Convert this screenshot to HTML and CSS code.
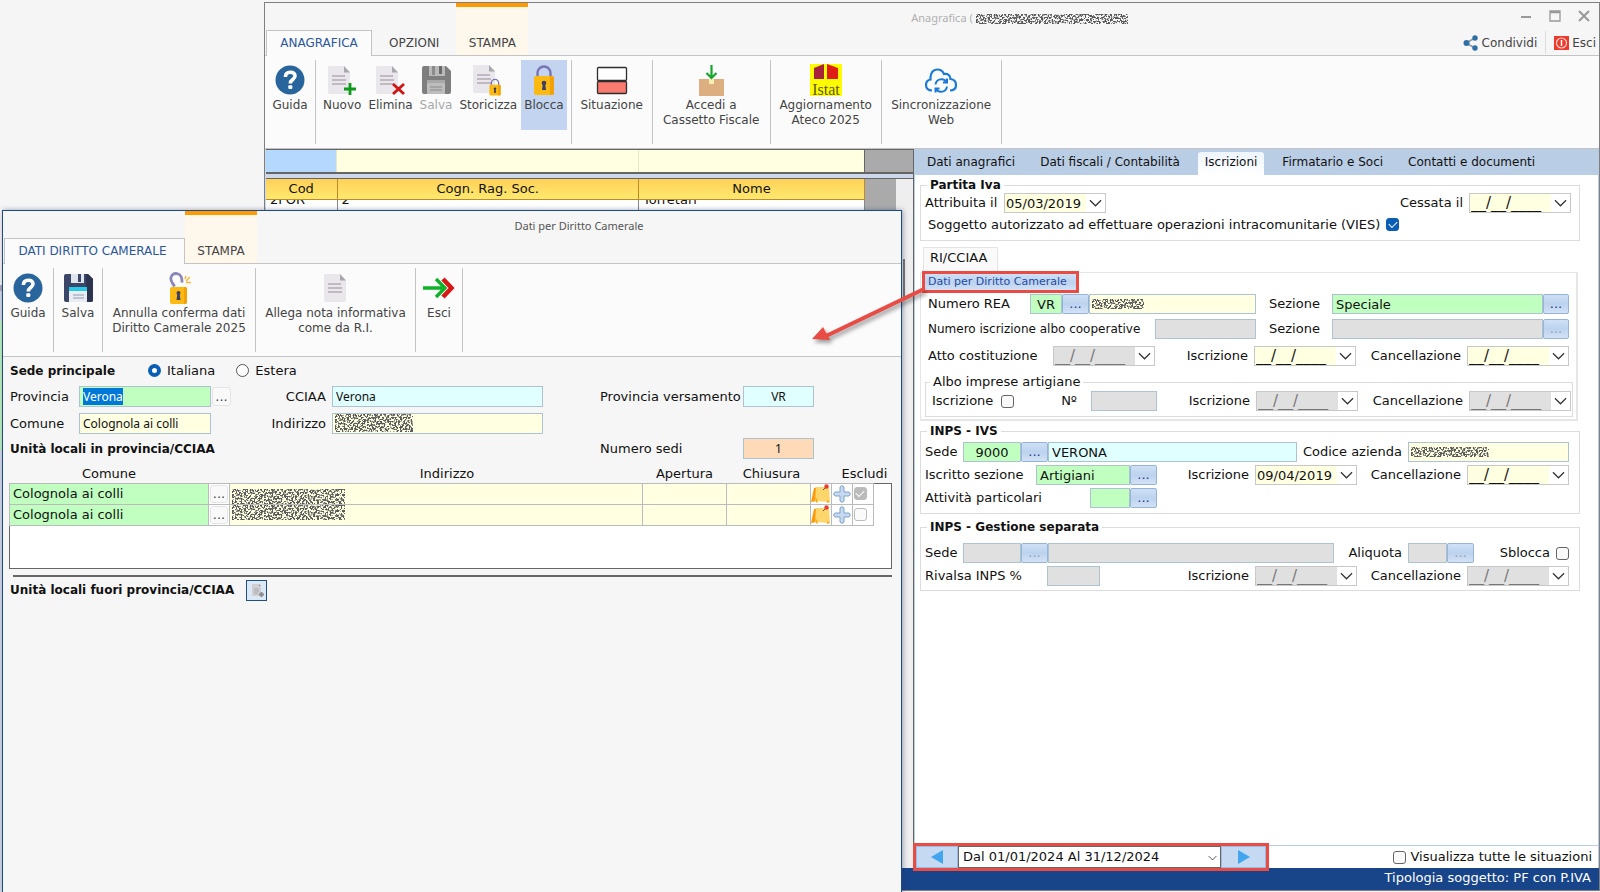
FILE: index.html
```html
<!DOCTYPE html>
<html lang="it">
<head>
<meta charset="utf-8">
<title>Anagrafica</title>
<link rel="stylesheet" href="styles.css">
</head>
<body>
<svg class="defs" width="0" height="0" aria-hidden="true">
  <defs>
    <filter id="noise" x="0" y="0" width="100%" height="100%">
      <feTurbulence type="fractalNoise" baseFrequency="0.55" numOctaves="2" seed="7"/>
      <feColorMatrix values="0 0 0 0 0.1  0 0 0 0 0.1  0 0 0 0 0.1  9 0 0 0 -4.1"/>
    </filter>
    <symbol id="i-help" viewBox="0 0 32 32">
      <circle cx="16" cy="16" r="14.5" fill="#28659d"/>
      <path d="M11.400 13c0-3.200 2-4.800 4.800-4.800 2.900 0 4.800 1.500 4.800 3.900 0 3.500-4.700 3.400-4.700 7.400" fill="none" stroke="#fff" stroke-width="3.600"/>
      <rect x="14.300" y="21.300" width="4" height="3.800" rx="1" fill="#fff"/>
    </symbol>
    <symbol id="i-doc" viewBox="0 0 32 32">
      <path d="M6 2h15l6 6v20a2 2 0 0 1-2 2H7a2 2 0 0 1-2-2V3z" fill="#e9e7ec"/>
      <path d="M21 2l6 6.500h-6z" fill="#aaa8ae"/>
      <path d="M9 12h13M9 16h14M9 20h14" stroke="#b5a9b3" stroke-width="1.300"/>
    </symbol>
    <symbol id="i-new" viewBox="0 0 32 32">
      <use href="#i-doc" x="-3" width="32" height="32"/>
      <path d="M24 19v12M18 25h12" stroke="#0f9a1c" stroke-width="2.800"/>
    </symbol>
    <symbol id="i-del" viewBox="0 0 32 32">
      <use href="#i-doc" x="-3" width="32" height="32"/>
      <path d="M19 20l11 10M30 20l-11 10" stroke="#d01414" stroke-width="2.800"/>
    </symbol>
    <symbol id="i-lock" viewBox="0 0 32 32">
      <path d="M9.500 14V9a6.500 6.500 0 0 1 13 0v5" fill="none" stroke="#7a74b4" stroke-width="2.400"/>
      <rect x="6" y="12" width="20" height="19" rx="2" fill="#fdb913"/>
      <path d="M22 12h2a2 2 0 0 1 2 2v15a2 2 0 0 1-2 2h-2z" fill="#f2a206"/>
      <circle cx="16" cy="19" r="2.300" fill="#3a3f63"/>
      <path d="M15 19h2l1 7h-4z" fill="#3a3f63"/>
    </symbol>
    <symbol id="i-store" viewBox="0 0 32 32">
      <use href="#i-doc" x="-4" y="-1" width="32" height="32"/>
      <use href="#i-lock" x="14" y="14" width="18" height="18"/>
    </symbol>
    <symbol id="i-save-off" viewBox="0 0 32 32">
      <path d="M2 4a2 2 0 0 1 2-2h22l5 5v21a2 2 0 0 1-2 2H4a2 2 0 0 1-2-2z" fill="#7e7e7e"/>
      <path d="M9 2h16v10H9z" fill="#b9b9b9"/><path d="M19 2h3v8h-3z" fill="#6a6a6a"/><path d="M12 2h3v9h-3z" fill="#8b8b8b"/>
      <path d="M7 17h18v13H7z" fill="#bdbdbd"/><path d="M7 16h18v3H7z" fill="#a8a8a8"/>
      <path d="M10 23h12M10 26h12" stroke="#8a8a8a"/>
    </symbol>
    <symbol id="i-save" viewBox="0 0 32 32">
      <path d="M2 4a2 2 0 0 1 2-2h22l5 5v21a2 2 0 0 1-2 2H4a2 2 0 0 1-2-2z" fill="#3c4668"/>
      <path d="M24 2h2l5 5v21a2 2 0 0 1-2 2h-5z" fill="#2c3450"/>
      <path d="M9 2h13v9H9z" fill="#dfe5ec"/><path d="M16 2h3v8h-3z" fill="#3c4668"/>
      <path d="M7 16h18v14H7z" fill="#e8edf3"/><path d="M7 15h18v4H7z" fill="#27c9e6"/>
      <path d="M11 23h11M11 26h11" stroke="#8f9aab"/>
    </symbol>
    <symbol id="i-unlock" viewBox="0 0 32 32">
      <path d="M11.500 14.500C10 11.500 7.500 9.500 7.800 6.200 8.200 2.800 11 1 14 1.600c3.500.7 5.500 4.400 4.800 8.900" fill="none" stroke="#8a86b8" stroke-width="2.800"/>
      <rect x="7" y="15" width="17" height="17" rx="2" fill="#fdb913"/>
      <path d="M21 15h1a2 2 0 0 1 2 2v13a2 2 0 0 1-2 2h-1z" fill="#f2a206"/>
      <circle cx="15.500" cy="21" r="2" fill="#3a3f63"/><path d="M14.500 21h2l1 7h-4z" fill="#3a3f63"/>
      <path d="M22 7l1-3M23 9l4-4M23 10.500h5" stroke="#f6b930" stroke-width="1.500"/>
    </symbol>
    <symbol id="i-situ" viewBox="0 0 32 32">
      <rect x="1.500" y="3.500" width="29" height="13" rx="1" fill="#fff" stroke="#2e2e2e" stroke-width="1.300"/>
      <rect x="1.500" y="17.500" width="29" height="12" rx="1" fill="#f97a6f" stroke="#2e2e2e" stroke-width="1.300"/>
    </symbol>
    <symbol id="i-box" viewBox="0 0 32 32">
      <path d="M4 15h25v17H4z" fill="#dcae80"/><path d="M14 15h5v5h-5z" fill="#fbeeb0"/>
      <path d="M16.500 1v12M11.500 9l5 5 5-5" fill="none" stroke="#17a62d" stroke-width="2.200"/>
    </symbol>
    <symbol id="i-istat" viewBox="0 0 32 32">
      <path d="M0 0h32v32H0z" fill="#fffb00"/>
      <path d="M4 4l10-4v15H4z" fill="#a8223c"/><path d="M17 0l11 4v11H17z" fill="#df1d14"/>
      <text x="16" y="30.500" text-anchor="middle" font-family="Liberation Serif, serif" font-size="16" fill="#5d5a2c">Istat</text>
    </symbol>
    <symbol id="i-cloud" viewBox="0 0 32 32">
      <path d="M7 26.500C3 26.500 1 24 1 21c0-3 2-5 4.500-5.500C5 9 8 5.500 12.500 5.500c3.500 0 5.500 2 6.500 4.500 4-1 6.500 2 6.500 5 3.500.5 5.500 3 5.500 6 0 3.500-2.500 5.500-6 5.500" fill="none" stroke="#1a7ad8" stroke-width="2.200"/>
      <path d="M10.500 20.500a6 6 0 0 1 11-2.500M22 22.500a6 6 0 0 1-11 2.500M22 14.500v4h-4M10.500 28.500v-4h4" fill="none" stroke="#1a7ad8" stroke-width="2"/>
    </symbol>
    <symbol id="i-exit" viewBox="0 0 32 32">
      <path d="M20 7l8.500 9-8.500 9" fill="none" stroke="#d81717" stroke-width="4.500"/>
      <path d="M0 16h22M13 7l9 9-9 9" fill="none" stroke="#0fb32a" stroke-width="3.400"/>
    </symbol>
    <symbol id="i-share" viewBox="0 0 16 16">
      <path d="M3 8l9-5M3 8l9 5" stroke="#8a9aa8" stroke-width="1.500"/>
      <circle cx="3.500" cy="8" r="3" fill="#2f6fa8"/><circle cx="12" cy="3" r="2.700" fill="#2f6fa8"/><circle cx="12" cy="13" r="2.700" fill="#2f6fa8"/>
    </symbol>
    <symbol id="i-power" viewBox="0 0 16 16">
      <path d="M1 1h15v14H1z" fill="#ee3a2c"/><circle cx="8.500" cy="8" r="5" fill="none" stroke="#ffd6d0" stroke-width="1.200"/><path d="M8.500 5v6" stroke="#fff" stroke-width="1.500"/>
    </symbol>
    <symbol id="i-chev" viewBox="0 0 14 8"><path d="M1 1l6 6 6-6" fill="none" stroke="#333" stroke-width="1.300"/></symbol>
    <symbol id="i-note" viewBox="0 0 20 20">
      <path d="M3 4l4-1-1 14-6 1z" fill="#fb9a0b"/><path d="M5 3h13l1 15-15-1z" fill="#fdd66b"/><path d="M4 13l1 5 2 1-1-4zM16 16l3 2-3 1z" fill="#f5a91c"/>
      <path d="M12 6l3-3" stroke="#555"/><circle cx="15.500" cy="2.500" r="2.200" fill="#ec3b31"/>
    </symbol>
    <symbol id="i-plus" viewBox="0 0 20 20">
      <path d="M8 3l2-1.500L12 3v5h5l1.500 2L17 12h-5v5l-2 1.500L8 17v-5H3l-1.500-2L3 8h5z" fill="#c7d9ee" stroke="#7ea3cc"/>
    </symbol>
  </defs>
</svg>

<div class="desktop">
  <section class="window main" aria-label="Anagrafica">
    <header class="caption">
      <nav class="rtabs">
        <button class="rtab on">ANAGRAFICA</button>
        <button class="rtab">OPZIONI</button>
        <button class="rtab print">STAMPA</button>
      </nav>
      <div class="title faded">Anagrafica (<svg class="scr" width="152" height="10"><rect width="152" height="10" filter="url(#noise)"/></svg></div>
      <div class="corner">
        <div class="winbtns">
          <button aria-label="Riduci"><svg width="12" height="12"><path d="M1 7h10" stroke="#999" stroke-width="2"/></svg></button>
          <button aria-label="Ingrandisci"><svg width="12" height="12"><path d="M1 1h10v10H1zM1 2.500h10" fill="none" stroke="#999" stroke-width="1.300"/></svg></button>
          <button aria-label="Chiudi"><svg width="12" height="12"><path d="M1 1l10 10M11 1L1 11" stroke="#999" stroke-width="2"/></svg></button>
        </div>
        <div class="quick">
          <button><svg width="16" height="16"><use href="#i-share"/></svg>Condividi</button>
          <button class="sep"><svg width="16" height="16"><use href="#i-power"/></svg>Esci</button>
        </div>
      </div>
    </header>

    <div class="ribbon">
      <div class="group"><button class="rb"><svg><use href="#i-help"/></svg>Guida</button></div>
      <div class="group spread">
        <button class="rb"><svg><use href="#i-new"/></svg>Nuovo</button>
        <button class="rb"><svg><use href="#i-del"/></svg>Elimina</button>
        <button class="rb off" disabled><svg><use href="#i-save-off"/></svg>Salva</button>
        <button class="rb"><svg><use href="#i-store"/></svg>Storicizza</button>
        <button class="rb lit"><svg><use href="#i-lock"/></svg>Blocca</button>
      </div>
      <div class="group g80"><button class="rb"><svg><use href="#i-situ"/></svg>Situazione</button></div>
      <div class="group g118"><button class="rb"><svg><use href="#i-box"/></svg><span>Accedi a<br>Cassetto Fiscale</span></button></div>
      <div class="group g111"><button class="rb"><svg><use href="#i-istat"/></svg><span>Aggiornamento<br>Ateco 2025</span></button></div>
      <div class="group g120"><button class="rb"><svg><use href="#i-cloud"/></svg><span>Sincronizzazione<br>Web</span></button></div>
    </div>

    <div class="split">
      <div class="list">
        <div class="filter">
          <input class="f-cod" aria-label="Filtro Cod"><input class="f-soc" aria-label="Filtro Cogn. Rag. Soc."><input class="f-nome" aria-label="Filtro Nome"><span></span>
        </div>
        <div class="listbody">
          <table class="people">
            <colgroup><col class="c-cod"><col><col class="c-nome"></colgroup>
            <thead><tr><th>Cod</th><th>Cogn. Rag. Soc.</th><th>Nome</th></tr></thead>
            <tbody><tr><td><div>2FOR</div></td><td><div>2</div></td><td><div>Torretari</div></td></tr></tbody>
          </table>
          <div class="dead"></div>
          <div class="track"></div>
        </div>
      </div>

      <div class="detail">
        <nav class="tabs">
          <button>Dati anagrafici</button><button>Dati fiscali / Contabilità</button><button class="on">Iscrizioni</button><button>Firmatario e Soci</button><button>Contatti e documenti</button>
        </nav>
        <div class="body">
          <fieldset class="box iva">
            <legend>Partita Iva</legend>
            <div class="row r-iva">
              <label for="attr">Attribuita il</label>
              <span class="date"><input id="attr" value="05/03/2019"><button aria-label="Calendario"><svg><use href="#i-chev"/></svg></button></span>
              <label class="lr" for="cess">Cessata il</label>
              <span class="date void"><input id="cess" value="__/__/____"><button aria-label="Calendario"><svg><use href="#i-chev"/></svg></button></span>
            </div>
            <div class="vies"><label for="vies">Soggetto autorizzato ad effettuare operazioni intracomunitarie (VIES)</label><input type="checkbox" id="vies" checked></div>
          </fieldset>

          <button class="subtab">RI/CCIAA</button>
          <div class="ri">
            <button class="dirlink">Dati per Diritto Camerale</button>
            <div class="row r-rea">
              <label class="in" for="rea">Numero REA</label>
              <input class="g mid" value="VR" aria-label="Provincia REA"><button class="dots">...</button>
              <span class="cover y"><input class="y" id="rea"><svg class="scr" width="52" height="10"><rect width="52" height="10" filter="url(#noise)"/></svg></span>
              <label class="ls" for="sez1">Sezione</label><input class="g" id="sez1" value="Speciale"><button class="dots">...</button>
            </div>
            <div class="row r-coop">
              <label class="in tight" for="coop">Numero iscrizione albo cooperative</label><input id="coop" disabled>
              <label class="ls" for="sez2">Sezione</label><input id="sez2" disabled><button class="dots" disabled>...</button>
            </div>
            <div class="row r-atto">
              <label class="in" for="atto">Atto costituzione</label>
              <span class="date void off"><input id="atto" value="__/__/____" disabled><button aria-label="Calendario"><svg><use href="#i-chev"/></svg></button></span>
              <label class="lr" for="isc1">Iscrizione</label>
              <span class="date void"><input id="isc1" value="__/__/____"><button aria-label="Calendario"><svg><use href="#i-chev"/></svg></button></span>
              <label class="lr" for="can1">Cancellazione</label>
              <span class="date void"><input id="can1" value="__/__/____"><button aria-label="Calendario"><svg><use href="#i-chev"/></svg></button></span>
            </div>
            <fieldset class="box albo">
              <legend>Albo imprese artigiane</legend>
              <div class="row r-albo">
                <label class="in" for="alb">Iscrizione</label><input type="checkbox" id="alb">
                <label class="lr no" for="num">Nº</label><input id="num" disabled>
                <label class="lr" for="isc2">Iscrizione</label>
                <span class="date void off"><input id="isc2" value="__/__/____" disabled><button aria-label="Calendario"><svg><use href="#i-chev"/></svg></button></span>
                <label class="lr" for="can2">Cancellazione</label>
                <span class="date void off"><input id="can2" value="__/__/____" disabled><button aria-label="Calendario"><svg><use href="#i-chev"/></svg></button></span>
              </div>
            </fieldset>
          </div>

          <fieldset class="box ivs">
            <legend>INPS - IVS</legend>
            <div class="row r-sede">
              <label for="sede">Sede</label><input class="g mid" id="sede" value="9000"><button class="dots">...</button><input class="c" value="VERONA" aria-label="Nome sede">
              <label class="lr" for="caz">Codice azienda</label>
              <span class="cover y"><input class="y" id="caz"><svg class="scr" width="78" height="10"><rect width="78" height="10" filter="url(#noise)"/></svg></span>
            </div>
            <div class="row r-sez">
              <label for="isez">Iscritto sezione</label><input class="g" id="isez" value="Artigiani"><button class="dots">...</button>
              <label class="lr" for="isc3">Iscrizione</label>
              <span class="date"><input id="isc3" value="09/04/2019"><button aria-label="Calendario"><svg><use href="#i-chev"/></svg></button></span>
              <label class="lr" for="can3">Cancellazione</label>
              <span class="date void"><input id="can3" value="__/__/____"><button aria-label="Calendario"><svg><use href="#i-chev"/></svg></button></span>
            </div>
            <div class="row r-att"><label for="att">Attività particolari</label><input class="g" id="att"><button class="dots">...</button></div>
          </fieldset>

          <fieldset class="box gs">
            <legend>INPS - Gestione separata</legend>
            <div class="row r-gs">
              <label for="gsede">Sede</label><input id="gsede" disabled><button class="dots" disabled>...</button><input aria-label="Nome sede" disabled>
              <label class="lr" for="ali">Aliquota</label><input id="ali" disabled><button class="dots" disabled>...</button>
              <label class="lr" for="sbl">Sblocca</label><input type="checkbox" id="sbl">
            </div>
            <div class="row r-riv">
              <label for="riv">Rivalsa INPS %</label><input id="riv" disabled>
              <label class="lr" for="isc4">Iscrizione</label>
              <span class="date void off"><input id="isc4" value="__/__/____" disabled><button aria-label="Calendario"><svg><use href="#i-chev"/></svg></button></span>
              <label class="lr" for="can4">Cancellazione</label>
              <span class="date void off"><input id="can4" value="__/__/____" disabled><button aria-label="Calendario"><svg><use href="#i-chev"/></svg></button></span>
            </div>
          </fieldset>
        </div>
        <footer class="pager">
          <div class="period">
            <button aria-label="Precedente"><svg width="12" height="14"><path d="M12 0v14L0 7z" fill="#42a5ee"/></svg></button>
            <span class="pick">
              <select aria-label="Periodo"><option>Dal 01/01/2024 Al 31/12/2024</option></select>
              <svg width="9" height="6"><use href="#i-chev"/></svg>
            </span>
            <button class="next" aria-label="Successivo"><svg width="12" height="14"><path d="M0 0v14l12-7z" fill="#42a5ee"/></svg></button>
          </div>
          <label class="all"><input type="checkbox">Visualizza tutte le situazioni</label>
        </footer>
      </div>
    </div>
    <div class="status">Tipologia soggetto: PF con P.IVA</div>
  </section>

  <section class="window dialog" aria-label="Dati per Diritto Camerale">
    <header class="caption">
      <nav class="rtabs">
        <button class="rtab on">DATI DIRITTO CAMERALE</button>
        <button class="rtab print">STAMPA</button>
      </nav>
      <div class="title">Dati per Diritto Camerale</div>
    </header>
    <div class="ribbon">
      <div class="group"><button class="rb"><svg><use href="#i-help"/></svg>Guida</button></div>
      <div class="group g49"><button class="rb"><svg><use href="#i-save"/></svg>Salva</button></div>
      <div class="group g153"><button class="rb"><svg><use href="#i-unlock"/></svg><span>Annulla conferma dati<br>Diritto Camerale 2025</span></button></div>
      <div class="group g160"><button class="rb"><svg><use href="#i-doc"/></svg><span>Allega nota informativa<br>come da R.I.</span></button></div>
      <div class="group g47"><button class="rb"><svg><use href="#i-exit"/></svg>Esci</button></div>
    </div>
    <div class="dbody">
      <div class="kind">
        <strong>Sede principale</strong>
        <label><input type="radio" name="kind" checked>Italiana</label>
        <label><input type="radio" name="kind">Estera</label>
      </div>
      <div class="seat">
        <label for="prov">Provincia</label><span class="cover g"><mark>Verona</mark><input class="g" id="prov"></span><button class="plain">...</button>
        <label class="lr" for="cciaa">CCIAA</label><input class="c" id="cciaa" value="Verona">
        <label class="far" for="pv">Provincia versamento</label><input class="c mid" id="pv" value="VR">
        <label for="com">Comune</label><input class="y" id="com" value="Colognola ai colli"><span></span>
        <label class="lr" for="ind">Indirizzo</label><span class="cover y"><input class="y" id="ind"><svg class="scr" width="78" height="18"><rect width="78" height="18" filter="url(#noise)"/></svg></span>
      </div>
      <div class="units"><h2>Unità locali in provincia/CCIAA</h2><label class="far" for="ns">Numero sedi</label><input class="o mid" id="ns" value="1"></div>
      <table class="grid">
        <colgroup><col class="k-com"><col class="k-i"><col><col class="k-d"><col class="k-d"><col class="k-i"><col class="k-i"><col class="k-i"><col class="k-e"></colgroup>
        <thead><tr><th>Comune</th><th></th><th class="h-ind">Indirizzo</th><th>Apertura</th><th class="h-chi">Chiusura</th><th></th><th class="h-chi" colspan="3">Escludi</th></tr></thead>
        <tbody>
          <tr><td class="g">Colognola ai colli</td><td><button class="plain">...</button></td><td class="y"><svg class="scr up" width="113" height="15"><rect width="113" height="15" filter="url(#noise)"/></svg></td><td class="y"></td><td class="y"></td><td><svg class="ic"><use href="#i-note"/></svg></td><td><svg class="ic"><use href="#i-plus"/></svg></td><td><input type="checkbox" aria-label="Escludi" checked disabled></td><td class="end"></td></tr>
          <tr><td class="g">Colognola ai colli</td><td><button class="plain">...</button></td><td class="y"><svg class="scr down" width="113" height="15"><rect width="113" height="15" filter="url(#noise)"/></svg></td><td class="y"></td><td class="y"></td><td><svg class="ic"><use href="#i-note"/></svg></td><td><svg class="ic"><use href="#i-plus"/></svg></td><td><input type="checkbox" aria-label="Escludi" disabled></td><td class="end"></td></tr>
          <tr class="fill"><td colspan="9"></td></tr>
        </tbody>
      </table>
      <hr>
      <div class="outside"><h2>Unità locali fuori provincia/CCIAA</h2><button aria-label="Aggiungi unità"><svg width="18" height="18" viewBox="0 0 18 18"><path d="M4 3h7l2 2v10H4z" fill="#cfcfd3"/><path d="M11 3l2 2h-2z" fill="#999"/><path d="M6 8h5M6 10h5M6 12h4" stroke="#aaa"/><path d="M13.500 11v5M11 13.500h5" stroke="#8a8a8a" stroke-width="2"/></svg></button></div>
    </div>
  </section>

  <svg class="arrow" width="124" height="70" viewBox="0 0 124 70">
    <path d="M118 8L20 55" stroke="#e84c44" stroke-width="4"/>
    <path d="M6 58l11-12 7 13z" fill="#e84c44"/>
  </svg>
</div>
</body>
</html>
```
FILE: styles.css
```css
* { box-sizing: border-box; }
body { margin: 0; font: 13px/16px "DejaVu Sans", sans-serif; color: #111; }
button, input, select { font: inherit; color: inherit; margin: 0; padding: 0; border: 0; background: none; border-radius: 0; }
h2 { margin: 0; font-size: 12px; font-weight: bold; }
.defs { position: absolute; }

.desktop {
  position: relative; height: 100vh; overflow: hidden;
  background: linear-gradient(#a9a9c0 0 6px, #d3dbe8 6px 36px, #bdf3bd 36px 100%) 0 285px / 2px 165px no-repeat,
    linear-gradient(#d3dbe8, #d3dbe8) 0 450px / 2px 100% no-repeat, #f5f5f5;
}
.window { position: absolute; display: flex; flex-direction: column; background: #f6f6f6; }
.main { left: 264px; right: 0; top: 2px; bottom: 1px; border: 1px solid #7f7f7f; }
.dialog { left: 2px; right: 698px; top: 210px; bottom: 0; border: 1px solid #1e4a8c; border-bottom: 0; box-shadow: 1px 0 5px rgba(40, 60, 100, .45); }

/* caption and ribbon */
.caption { display: flex; height: 53px; border-bottom: 1px solid #c4c4c4; flex: none; }
.rtabs { display: flex; align-items: flex-end; padding-left: 1px; }
.rtab { height: 25px; padding: 2px 17px 0; font: 12px/23px "DejaVu Sans", sans-serif; color: #444; }
.rtab.on { color: #2b579a; background: #fbfbfb; border: 1px solid #c4c4c4; border-bottom: 0; height: 26px; margin-bottom: -1px; padding: 0 13px; line-height: 25px; min-width: 106px; }
.rtab.print { height: 52px; width: 72px; padding: 25px 0 0; background: #fef7ec; border-top: 4px solid #ff9a00; }
.title { flex: 1; padding-top: 6px; text-align: center; font: 11px/18px "Noto Sans", sans-serif; color: #555; }
.title.faded { padding-left: 48px; color: #b0b0b0; }
.title .scr { margin-left: 3px; }
.scr { vertical-align: middle; flex: none; }
.corner { display: flex; flex-direction: column; align-items: flex-end; }
.winbtns { display: flex; gap: 17px; padding: 7px 9px 0 0; height: 28px; }
.winbtns button { width: 12px; height: 12px; }
.winbtns svg { display: block; }
.quick { display: flex; align-items: center; font-size: 12px; color: #444; }
.quick button { display: flex; align-items: center; gap: 3px; height: 23px; padding-right: 8px; }
.quick .sep { border-left: 1px solid #ddd; padding: 0 3px 0 7px; }
.ribbon { display: flex; flex: none; height: 93px; padding: 4px 0; background: #fbfbfb; border-bottom: 1px solid #c4c4c4; color: #444; }
.group { display: flex; justify-content: center; align-items: flex-start; border-right: 1px solid #c4c4c4; width: 51px; }
.group.spread { width: auto; padding: 0 4px; gap: 1px; }
.group.spread .rb { padding: 4px 3px 0; }
.g80 { width: 81px; } .g118 { width: 118px; } .g111 { width: 111px; } .g120 { width: 120px; }
.g49 { width: 49px; } .g153 { width: 153px; } .g160 { width: 160px; } .g47 { width: 47px; }
.rb { display: flex; flex-direction: column; gap: 2px; align-items: center; justify-content: flex-start; height: 70px; padding-top: 4px; font-size: 12px; line-height: 15px; text-align: center; white-space: nowrap; }
.rb svg { display: block; width: 32px; height: 32px; flex: none; }
.rb.off { color: #a8a8a8; }
.rb.lit { background: #c3d4f0; }

/* left list */
.split { display: flex; flex: 1; min-height: 0; }
.list { flex: 0 0 649px; min-width: 0; display: flex; flex-direction: column; padding-left: 1px; background: #cdd8ec; border-right: 1px solid #666; }
.filter { display: flex; height: 25px; border: 1px solid #666; border-width: 1px 0 2px; background: #aaa; flex: none; }
.filter input { height: 22px; min-width: 0; border-right: 1px solid #e6e6c8; background: #ffffe1; }
.filter .f-cod { width: 71px; background: #b5d8ff; }
.filter .f-soc { flex: 1; }
.filter .f-nome { width: 226px; border-right: 1px solid #666; }
.filter span { width: 48px; }
.listbody { display: flex; flex: 1; margin-top: 4px; border-top: 1px solid #666; background: #fff; }
.people { flex: 1; width: 590px; height: 32px; border-collapse: collapse; table-layout: fixed; }
.people th { height: 20px; padding: 0; font-weight: normal; background: linear-gradient(#ffd058, #ffe96e); border: 1px solid #c08a28; border-top: 0; border-left: 0; }
.people td { padding: 0 4px; height: 12px; border-right: 1px solid #888; vertical-align: top; }
.people td div { height: 10px; overflow: hidden; line-height: 0; }
.c-cod { width: 71px; } .c-nome { width: 226px; }
.dead { width: 31px; background: #aaa; }
.track { width: 17px; background: #eee linear-gradient(#777, #777) 7px 80px / 2px 38px no-repeat; }

/* detail pane */
.detail { flex: 1; min-width: 0; display: flex; flex-direction: column; background: #fff; border: solid #b9cce5; border-width: 0 1px; }
.tabs { display: flex; align-items: flex-end; height: 26px; padding-left: 5px; background: #b9cde5; flex: none; }
.tabs button { height: 23px; padding: 0 7px 4px; margin-right: 11px; font-size: 12px; }
.tabs .on { background: linear-gradient(#eef5fd, #fff); border-radius: 3px 3px 0 0; }
.body { flex: 1; padding: 2px 18px 0 5px; }
.box { margin: 0; padding: 0 10px 0 4px; border: 1px solid #dcdcdc; min-width: 0; }
.box legend { margin-left: 2px; padding: 0 3px; line-height: 16px; font-size: 12px; font-weight: bold; }
.box.iva { padding: 0 8px 4px 4px; }
.row { display: grid; align-items: center; height: 20px; white-space: nowrap; }
.row input:not([type]) { width: 100%; min-width: 0; height: 20px; padding: 0 3px; border: 1px solid #adc3cf; }
.in { padding-left: 3px; }
.tight { font-size: 12px; }
.lr { padding-right: 6px; text-align: right; }
.lr.no { padding-right: 14px; }
.ls { padding-left: 13px; }
input.g, .g { background: #c0ffc0; }
input.y, .y { background: #ffffe1; }
input.c { background: #e0ffff; }
input.o { background: #ffdab9; }
input.mid { text-align: center; }
input:disabled { background: #e0e0e0; color: #777; }
.r-iva { grid-template-columns: 79px 102px 1fr 102px; }
.r-rea { grid-template-columns: 105px 32px 27px 167px 76px 1fr 26px; }
.r-coop { grid-template-columns: 230px 101px 76px 1fr 26px; margin-top: 5px; }
.r-atto { grid-template-columns: 128px 102px 99px 102px 1fr 102px; margin-top: 7px; }
.r-albo { grid-template-columns: 72px 13px 77px 66px 99px 102px 1fr 102px; }
.r-sede { grid-template-columns: 38px 58px 27px 1fr 111px 161px; }
.r-sez { grid-template-columns: 111px 94px 27px 98px 102px 1fr 102px; }
.r-att { grid-template-columns: 165px 40px 27px; }
.r-gs { grid-template-columns: 38px 58px 27px 1fr 74px 39px 27px 82px 13px; }
.r-riv { grid-template-columns: 122px 53px 155px 102px 1fr 102px; }
.vies { display: flex; align-items: center; gap: 6px; height: 23px; padding-left: 3px; }
.date { display: flex; height: 20px; border: 1px solid #c8c8c8; background: #fff; }
.row .date input:not([type]) { flex: 1; height: 18px; border: 0; padding: 0 0 0 1px; background: #ffffe1; }
.row .date.off input:not([type]) { background: #e0e0e0; }
.date.void input { font-size: 15px; }
.date button { width: 19px; height: 18px; }
.date svg { width: 13px; height: 8px; display: block; margin: 0 auto; }
.dots { height: 20px; line-height: 14px; border: 1px solid #94b4da; border-radius: 2px; background: linear-gradient(#cfe0f5, #bcd2ee 50%, #d3e2f5); color: #1c3f8c; }
.dots:disabled { color: #8fa0b4; }
.cover { position: relative; display: block; height: 20px; }
.cover .scr { position: absolute; left: 3px; top: 5px; }
input[type=checkbox] { appearance: none; display: block; width: 13px; height: 13px; border: 1px solid #666; border-radius: 3px; background: #fafafa; flex: none; }
#vies { background: #0a5fb4; border-color: #0a5fb4; }
input[type=checkbox]:checked { display: grid; place-items: center; }
input[type=checkbox]:checked::after { content: ""; width: 7px; height: 4px; border: solid #fff; border-width: 0 0 1px 1px; rotate: -45deg; margin-bottom: 2px; }
.subtab { display: block; height: 25px; margin: 6px 0 0 3px; padding: 0 10px 4px 6px; background: #fafafa; border: 1px solid #e4e4e4; border-bottom: 0; }
.ri { margin-right: 2px; padding: 1px 3px 2px 4px; border: solid #e6e6e6; border-width: 1px 2px 2px 1px; }
.ri > .row { padding-right: 4px; }
.dirlink { display: block; height: 16px; width: 151px; margin-bottom: 4px; padding: 0 0 0 3px; font-size: 11px; line-height: 14px; text-align: left; color: #1f4ba5; background: linear-gradient(#cfe0f5, #bcd2ee 50%, #d3e2f5); outline: 3px solid #e84c44; }
.box.albo { margin-top: 8px; padding: 0 1px 4px 0; }
.albo legend { margin-left: 4px; font-size: 13px; font-weight: normal; }
.albo .row { height: 22px; padding-left: 3px; }
.box.ivs { margin-top: 2px; padding-top: 3px; padding-bottom: 5px; display: grid; gap: 3px; }
.box.gs { margin-top: 5px; padding-top: 8px; padding-bottom: 4px; display: grid; gap: 3px; }
.pager { display: flex; flex: none; height: 23px; border-top: 1px solid #b9cce5; justify-content: space-between; align-items: center; }
.period { display: flex; height: 22px; width: 350px; margin-left: 1px; outline: 3px solid #e84c44; position: relative; }
.period button { width: 42px; display: grid; place-items: center; background: #c5daf2; border: 1px solid #9dbbe0; }
.period .next { width: 45px; }
.pick { flex: 1; display: flex; position: relative; }
.pick select { flex: 1; appearance: none; padding-left: 4px; border: 1px solid #666; background: #fff; }
.pick svg { position: absolute; right: 4px; top: 9px; pointer-events: none; }
.all { display: flex; align-items: center; gap: 5px; padding-right: 6px; }
.status { flex: none; height: 22px; padding-right: 8px; background: #18458a; color: #fff; text-align: right; line-height: 20px; }

/* dialog */
.dialog .rtab.on { padding: 0 16px 0 12px; width: 181px; }
.dbody { padding: 4px 9px 0 6px; }
.dbody input:not([type]) { width: 100%; min-width: 0; height: 21px; padding: 0 3px; border: 1px solid #adc3cf; font: 12px/16px "Noto Sans", sans-serif; }
.kind { display: flex; align-items: center; height: 19px; padding-left: 1px; }
.kind strong { width: 138px; font-size: 12px; }
.kind label { display: flex; align-items: center; gap: 6px; margin-right: 21px; }
.kind input { appearance: none; width: 13px; height: 13px; border: 1px solid #555; border-radius: 50%; background: #fff; }
.kind input:checked { border: 4px solid #0a5fb4; }
.seat { display: grid; grid-template-columns: 69px 132px 21px 100px 211px 57px 143px 71px; row-gap: 6px; align-items: center; margin-top: 6px; padding-left: 1px; white-space: nowrap; }
.seat .far { grid-column: 7; }
.seat .cover { height: 21px; }
.seat .cover .scr { top: 1px; }
.seat mark { position: absolute; left: 4px; top: 2px; background: #0078d7; color: #fff; font: 12px/17px "Noto Sans", sans-serif; }
.plain { width: 19px; height: 19px; margin: 0 1px; border: 1px solid #e4e4e4; border-radius: 3px; background: #f9f9f9; line-height: 14px; color: #444; }
.units { display: grid; grid-template-columns: 590px 143px 71px; align-items: center; margin-top: 4px; padding-left: 1px; }
.grid { width: 100%; border-collapse: collapse; table-layout: fixed; margin-top: 7px; }
.grid th { height: 17px; padding: 0; font-weight: normal; line-height: 16px; }
.grid .h-ind { padding-left: 22px; }
.grid .h-chi { padding-left: 6px; }
.grid tbody { border: 1px solid #666; background: #fff; }
.grid td { height: 21px; padding: 0; border: 1px solid #bbb; }
.grid td.g { padding-left: 3px; }
.grid td.end { border: 0; }
.grid .fill td { height: 43px; border: 0; }
.k-com { width: 199px; } .k-i { width: 21px; } .k-d { width: 84px; } .k-e { width: 18px; }
.grid .plain { display: block; width: 18px; height: 18px; }
.grid .ic { display: block; width: 20px; height: 20px; }
.grid input { margin: 0 1px; border-color: #bbb; background: #fafafa; }
.grid input:checked { background: #bbb; }
.grid .scr { display: block; margin-left: 2px; }
.scr.up { margin-top: 5px; } .scr.down { margin-bottom: 5px; }
hr { margin: 6px 0 0 4px; border: 0; height: 2px; background: #666; }
.outside { display: flex; align-items: center; gap: 12px; margin-top: 3px; padding-left: 1px; }
.outside button { width: 21px; height: 21px; border: 1px solid #1d4f80; background: #dbe8f6; display: grid; place-items: center; }

.arrow { position: absolute; left: 806px; top: 281px; filter: drop-shadow(2px 3px 2px rgba(0, 0, 0, .4)); }
```
